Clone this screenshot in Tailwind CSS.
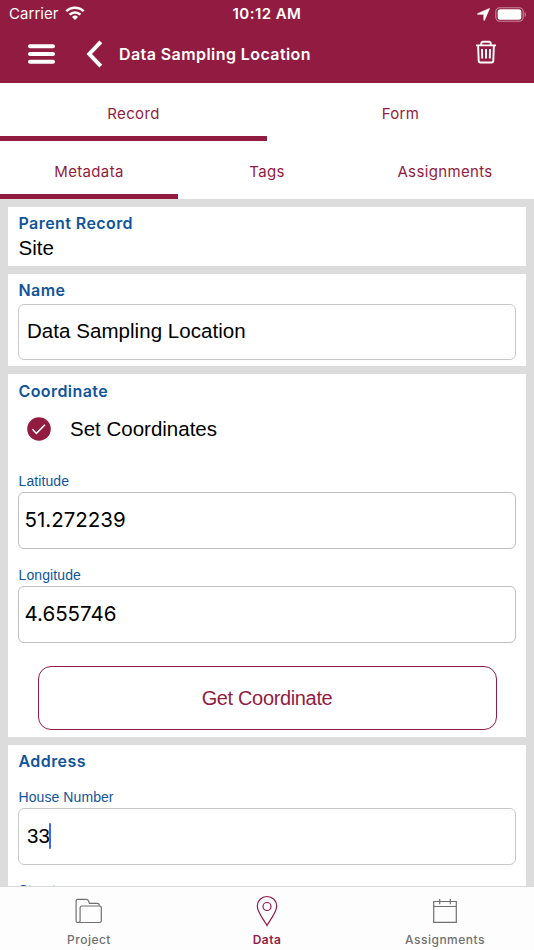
<!DOCTYPE html>
<html lang="en">
  <head>
    <meta charset="utf-8">
    <title>Data Sampling Location</title>
    <script src="https://cdn.jsdelivr.net/npm/@tailwindcss/browser@4"></script>
  </head>
  <body class="bg-[#dcdcdc] font-['Inter',sans-serif]">
    <div class="flex h-[950px] w-[534px] flex-col overflow-hidden">
      <!-- Header -->
      <header class="h-[83px] shrink-0 bg-[#921c41] text-white">
        <div class="grid h-7 grid-cols-3 items-center pl-[9px] pr-[7px]">
          <div class="flex items-center gap-[6px]">
            <span class="text-[15px] tracking-[0.05px]">Carrier</span>
            <svg class="mb-0.5 h-[14px] w-5" viewBox="0 0 20 14" fill="none" stroke="currentColor" stroke-width="2.5">
              <path d="M1.3 5.2a12.4 12.4 0 0 1 17.4 0" />
              <path d="M4.6 8.6a7.7 7.7 0 0 1 10.8 0" />
              <path d="M10 14l-3-3.1a4.3 4.3 0 0 1 6 0z" fill="currentColor" stroke="none" />
            </svg>
          </div>
          <span class="-ml-[2px] text-center text-[15px] font-semibold tracking-[0.45px]">10:12 AM</span>
          <div class="flex items-center justify-end gap-[5px]">
            <svg class="h-[13px] w-[13px]" viewBox="0 0 12 12" fill="currentColor" stroke="currentColor" stroke-width=".6" stroke-linejoin="round">
              <path d="M11.600.4L6.900 11.300c-.2.4-.6.3-.6-.1V5.800H.7c-.5 0-.5-.4-.1-.6z" />
            </svg>
            <svg class="h-[15px] w-[32px]" viewBox="0 0 32 15" fill="none">
              <rect x=".8" y=".8" width="27.4" height="13.4" rx="4" stroke="#c58a9d" stroke-width="1.1" />
              <rect x="2.7" y="2.2" width="23.6" height="10.600" rx="2.5" fill="#fff" />
              <path d="M29.6 5c1.7.6 1.7 4.400 0 5z" fill="#c58a9d" />
            </svg>
          </div>
        </div>
        <div class="flex h-[52px] items-center pl-7 pr-[37px]">
          <svg class="h-5 w-[27px]" viewBox="0 0 27 20" fill="none" stroke="currentColor" stroke-width="4" stroke-linecap="round">
            <path d="M2 2.300h23M2 10h23M2 17.700h23" />
          </svg>
          <svg class="ml-[31px] h-7 w-[17px]" viewBox="0 0 17 28" fill="none" stroke="currentColor" stroke-width="4">
            <path d="M14.800 1.800L3.300 14l11.500 12.200" />
          </svg>
          <h1 class="ml-4 text-[16px] font-semibold tracking-[0.42px]">Data Sampling Location</h1>
          <svg class="mb-[5px] ml-auto h-6 w-[22px]" viewBox="0 0 22 24" fill="none" stroke="currentColor" stroke-width="1.9">
            <path d="M1 5.400h20M6.300 5V3.500c0-1 .7-1.700 1.700-1.700h6c1 0 1.700.7 1.700 1.700V5M3.100 5.400l.6 15.400c0 1.100.8 1.700 1.800 1.700h11c1 0 1.800-.6 1.800-1.700l.6-15.400M7 9l.2 9.500M11 9v9.500M15 9l-.2 9.500" />
          </svg>
        </div>
      </header>

      <!-- Tabs -->
      <nav class="grid h-[58px] shrink-0 grid-cols-2 bg-white text-center text-[15px] tracking-[0.35px] text-[#921c41]">
        <a class="border-b-[5px] border-[#921c41] pt-5">Record</a>
        <a class="pt-5">Form</a>
      </nav>
      <nav class="grid h-[58px] shrink-0 grid-cols-3 bg-white text-center text-[15px] tracking-[0.35px] text-[#921c41]">
        <a class="border-b-[5px] border-[#921c41] pt-5">Metadata</a>
        <a class="pt-5">Tags</a>
        <a class="pt-5">Assignments</a>
      </nav>

      <!-- Record details -->
      <main class="flex min-h-0 flex-1 flex-col gap-2 overflow-hidden px-2 pt-2 font-['Liberation_Sans',sans-serif]">
        <section class="h-[59px] shrink-0 bg-white px-[10px] pt-1">
          <h2 class="pl-[0.5px] font-['Inter',sans-serif] text-[16px] font-semibold tracking-[0.42px] text-[#10559a]">Parent Record</h2>
          <p class="pl-[0.5px] text-[20.5px] leading-[26px] text-black">Site</p>
        </section>

        <section class="h-[92px] shrink-0 bg-white px-[10px] pt-1">
          <h2 class="pl-[0.5px] font-['Inter',sans-serif] text-[16px] font-semibold tracking-[0.42px] text-[#10559a]">Name</h2>
          <div class="mt-[2px] flex h-[56px] items-center rounded-md border border-[#c8c8c8] px-2 pb-[2px] text-[20.5px] tracking-[0.05px]">Data Sampling Location</div>
        </section>

        <section class="h-[363px] shrink-0 bg-white px-[10px] pt-[5px]">
          <h2 class="pl-[0.5px] font-['Inter',sans-serif] text-[16px] font-semibold tracking-[0.42px] text-[#10559a]">Coordinate</h2>
          <div class="mt-[14px] flex h-6 items-center gap-[19px] pl-[9px] text-[20.5px]">
            <svg class="h-6 w-6" viewBox="0 0 24 24" fill="none">
              <circle cx="12" cy="12" r="11.8" fill="#921c41" />
              <path d="M5.400 12.300l4 4.100 8.600-8.700" stroke="#fff" stroke-width="1.5" />
            </svg>
            <span>Set Coordinates</span>
          </div>
          <label class="mt-8 block pl-[0.5px] text-[14px] leading-4 tracking-[0.1px] text-[#10559a]">Latitude</label>
          <div class="mt-[3px] flex h-[57px] items-center rounded-md border border-[#c0c0c0] px-[5.5px] font-['Inter',sans-serif] text-[20.5px]">51.272239</div>
          <label class="mt-[18px] block pl-[0.5px] text-[14px] leading-4 tracking-[0.1px] text-[#10559a]">Longitude</label>
          <div class="mt-[3px] flex h-[57px] items-center rounded-md border border-[#c0c0c0] px-[5.5px] font-['Inter',sans-serif] text-[20.5px]">4.655746</div>
          <button type="button" class="mx-auto mt-[23px] block h-[64px] w-[459px] rounded-[13px] border-[1.5px] border-[#921c41] pb-px text-[20px] tracking-[-0.35px] text-[#921c41]">Get Coordinate</button>
        </section>

        <section class="h-[300px] shrink-0 bg-white px-[10px] pt-1">
          <h2 class="pl-[0.5px] font-['Inter',sans-serif] text-[16px] font-semibold tracking-[0.42px] text-[#10559a]">Address</h2>
          <label class="mt-4 block pl-[0.5px] text-[14px] leading-4 tracking-[0.08px] text-[#10559a]">House Number</label>
          <div class="mt-[3px] flex h-[57px] items-center rounded-md border border-[#c8c8c8] px-2 pb-px text-[20.5px]">33<span class="-ml-px h-[26px] w-[2.5px] rounded-full bg-[#4169e1]"></span></div>
          <label class="mt-[17px] block pl-[0.5px] text-[14px] leading-4 text-[#10559a]">Street</label>
        </section>
      </main>

      <!-- Bottom navigation -->
      <footer class="grid h-[64px] shrink-0 grid-cols-3 border-t border-[#d8d8d8] bg-[#fdfdfd] text-[12px] font-medium tracking-[0.5px] text-[#707070]">
        <a class="flex flex-col items-center pt-2">
          <svg class="h-8 w-8" viewBox="0 0 32 32" fill="none" stroke="currentColor" stroke-width="1.2">
            <path d="M6.400 27.500H4.800c-1 0-1.700-.7-1.700-1.700V6c0-1 .7-1.700 1.700-1.700h8.700c1 0 1.500.5 1.900 1.400l1.100 2.600h8c1 0 1.700.7 1.900 2.400" />
            <path d="M5.200 27.500c1.400 0 1.900-.8 1.900-1.900V12.700c0-1 .7-1.700 1.700-1.700h17.500c1.200 0 2 .7 2 1.700v13.100c0 1-.7 1.700-1.700 1.700z" />
          </svg>
          <span class="mt-1">Project</span>
        </a>
        <a class="flex flex-col items-center pt-2 font-semibold text-[#921c41]">
          <svg class="h-8 w-8" viewBox="0 0 32 32" fill="none" stroke="currentColor" stroke-width="1.2">
            <path d="M16 30.400C14.500 27 6.300 18 6.300 11.100A9.600 9.600 0 0 1 16 1.500a9.600 9.600 0 0 1 9.700 9.600C25.700 18 17.500 27 16 30.400z" />
            <circle cx="16" cy="11.500" r="4" />
          </svg>
          <span class="mt-1">Data</span>
        </a>
        <a class="flex flex-col items-center pt-2">
          <svg class="h-8 w-8" viewBox="0 0 32 32" fill="none" stroke="currentColor" stroke-width="1.2">
            <path d="M4.700 6.500h22.600v20.800H4.700zM4.700 11.500h22.600M10.700 4v5.200M21.300 4v5.200" />
          </svg>
          <span class="mt-1">Assignments</span>
        </a>
      </footer>
    </div>
  </body>
</html>
